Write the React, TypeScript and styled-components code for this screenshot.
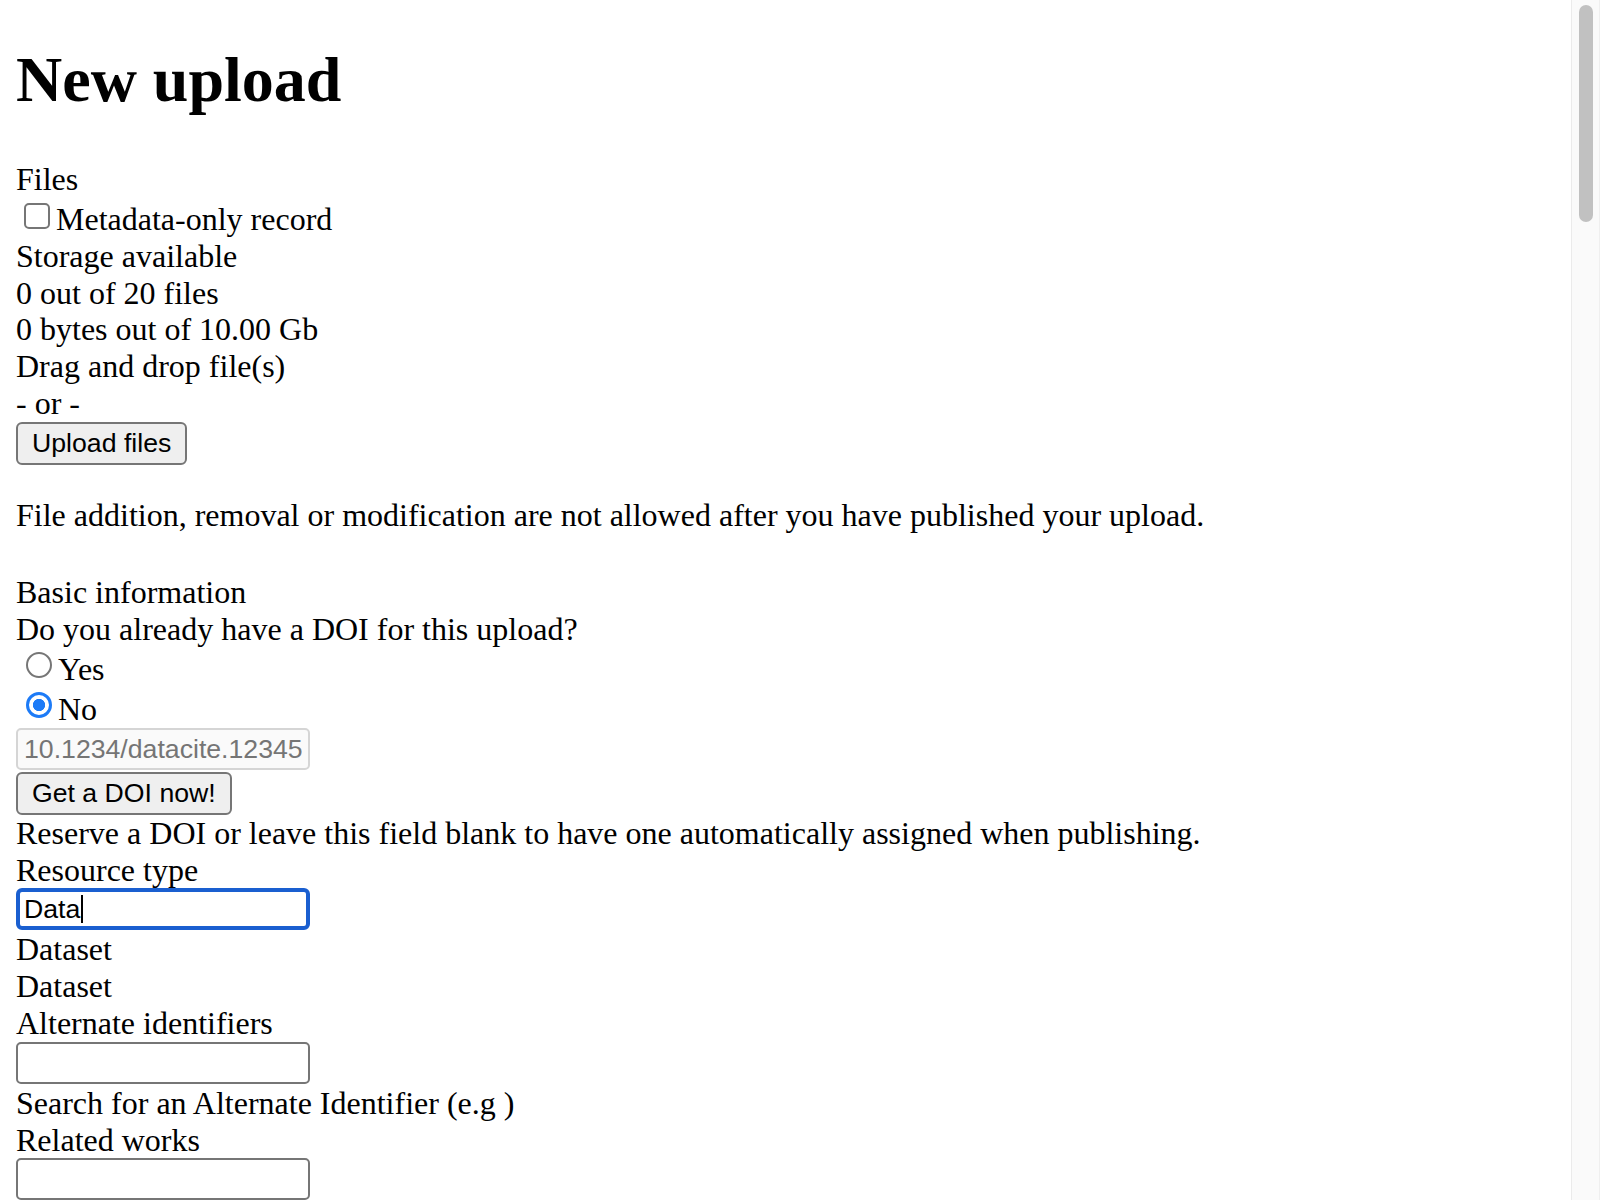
import React from 'react';
import styled, { createGlobalStyle } from 'styled-components';

const GlobalStyle = createGlobalStyle`
  html, body {
    margin: 0;
    padding: 0;
    background: #ffffff;
  }
  html {
    scrollbar-width: none;
  }
  ::-webkit-scrollbar {
    display: none;
  }
  body {
    font-family: "Liberation Serif", "Times New Roman", serif;
    color: #000000;
  }
`;

const Page = styled.main`
  padding: 0 16px 16px;
`;

const Title = styled.h1`
  margin: 43px 0 44px;
  font-family: "Liberation Serif", "Times New Roman", serif;
  font-size: 64px;
  font-weight: 700;
  line-height: 73.6px;
`;

const TextLine = styled.div`
  font-size: 32px;
  line-height: 36.7px;
`;

const Notice = styled.p`
  margin: 32px 0 41px;
  font-size: 32px;
  line-height: 36.7px;
`;

const OptionRow = styled.label<{ $pad: number }>`
  display: flex;
  align-items: flex-start;
  padding-top: ${(p) => p.$pad}px;
`;

const OptionText = styled.span`
  display: block;
  font-size: 32px;
  line-height: 36.7px;
`;

const Checkbox = styled.input.attrs({ type: 'checkbox' })`
  appearance: none;
  box-sizing: border-box;
  width: 26px;
  height: 26px;
  margin: 2px 6px 0 8px;
  border: 2px solid #767676;
  border-radius: 5px;
  background: #ffffff;
  flex: none;
`;

const Radio = styled.input.attrs({ type: 'radio' })`
  appearance: none;
  box-sizing: border-box;
  width: 26px;
  height: 26px;
  margin: 1px 6px 0 10px;
  border: 2px solid #767676;
  border-radius: 50%;
  background: #ffffff;
  flex: none;

  &:checked {
    border: 3.5px solid #1d7bf7;
    background: radial-gradient(circle, #1d7bf7 0 5.8px, #ffffff 6.5px);
  }
`;

const Button = styled.button<{ $gap: number }>`
  display: block;
  width: fit-content;
  box-sizing: border-box;
  height: 43px;
  margin: 0 0 ${(p) => p.$gap}px;
  padding: 0 14px;
  border: 2px solid #767676;
  border-radius: 6px;
  background: #efefef;
  color: #000000;
  font-family: "Liberation Sans", Arial, sans-serif;
  font-size: 26.67px;
  line-height: 1;
`;

const TextInput = styled.input`
  display: block;
  box-sizing: border-box;
  width: 294px;
  height: 42px;
  margin: 0 0 1.5px;
  padding: 0 6px;
  border: 2px solid #767676;
  border-radius: 5px;
  background: #ffffff;
  color: #000000;
  font-family: "Liberation Sans", Arial, sans-serif;
  font-size: 26.67px;

  &::placeholder {
    color: #757575;
  }

  &:disabled {
    background: #fafafa;
    border-color: #d5d5d5;
  }
`;

const FocusedField = styled.div`
  display: flex;
  align-items: center;
  box-sizing: border-box;
  width: 294px;
  height: 42px;
  margin: 0 0 1px;
  padding: 0 4px;
  border: 4px solid #1a5fd0;
  border-radius: 6px;
  background: #ffffff;
  color: #000000;
  font-family: "Liberation Sans", Arial, sans-serif;
  font-size: 26.67px;
`;

const Caret = styled.span`
  display: inline-block;
  width: 2px;
  height: 28px;
  margin-left: 1px;
  background: #000000;
`;

const ScrollTrack = styled.div`
  position: fixed;
  top: 0;
  right: 0;
  box-sizing: border-box;
  width: 29px;
  height: 100vh;
  padding: 5px 6px 0 7px;
  background: #fafafa;
  border-left: 1px solid #ebebeb;
  border-right: 1px solid #efefef;
`;

const ScrollThumb = styled.div`
  height: 217px;
  border-radius: 8px;
  background: #c1c1c1;
`;

export default function App() {
  return (
    <>
      <GlobalStyle />
      <Page>
        <Title>New upload</Title>

        <TextLine>Files</TextLine>
        <OptionRow $pad={4}>
          <Checkbox />
          <OptionText>Metadata-only record</OptionText>
        </OptionRow>
        <TextLine>Storage available</TextLine>
        <TextLine>0 out of 20 files</TextLine>
        <TextLine>0 bytes out of 10.00 Gb</TextLine>
        <TextLine>Drag and drop file(s)</TextLine>
        <TextLine>- or -</TextLine>
        <Button type="button" $gap={1}>Upload files</Button>

        <Notice>
          File addition, removal or modification are not allowed after you have published your upload.
        </Notice>

        <TextLine>Basic information</TextLine>
        <TextLine>Do you already have a DOI for this upload?</TextLine>
        <OptionRow $pad={3.5}>
          <Radio name="has-doi" value="yes" />
          <OptionText>Yes</OptionText>
        </OptionRow>
        <OptionRow $pad={3.5}>
          <Radio name="has-doi" value="no" defaultChecked />
          <OptionText>No</OptionText>
        </OptionRow>
        <TextInput disabled placeholder="10.1234/datacite.12345" />
        <Button type="button" $gap={0.5}>Get a DOI now!</Button>
        <TextLine>
          Reserve a DOI or leave this field blank to have one automatically assigned when publishing.
        </TextLine>
        <TextLine>Resource type</TextLine>
        <FocusedField role="textbox" aria-label="Resource type">
          Data
          <Caret />
        </FocusedField>
        <TextLine>Dataset</TextLine>
        <TextLine>Dataset</TextLine>
        <TextLine>Alternate identifiers</TextLine>
        <TextInput aria-label="Alternate identifiers" />
        <TextLine>Search for an Alternate Identifier (e.g )</TextLine>
        <TextLine>Related works</TextLine>
        <TextInput aria-label="Related works" />
      </Page>
      <ScrollTrack aria-hidden="true">
        <ScrollThumb />
      </ScrollTrack>
    </>
  );
}
